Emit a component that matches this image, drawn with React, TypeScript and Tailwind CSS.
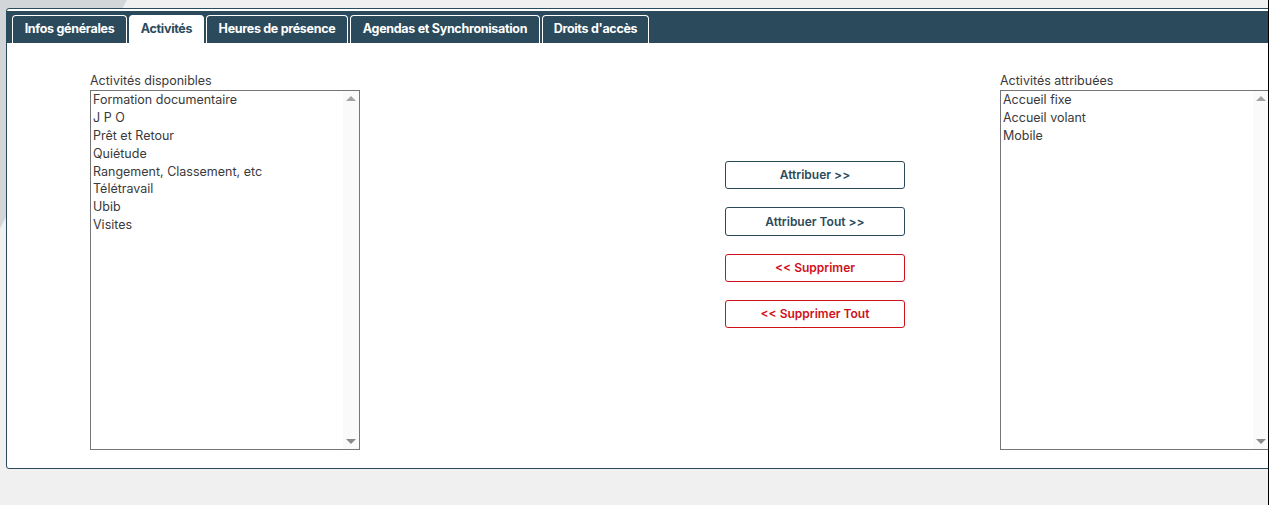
import React from "react";

const dispo = [
  "Formation documentaire",
  "J P O",
  "Prêt et Retour",
  "Quiétude",
  "Rangement, Classement, etc",
  "Télétravail",
  "Ubib",
  "Visites",
];
const attrib = ["Accueil fixe", "Accueil volant", "Mobile"];

const tabs: { t: string; w: string }[] = [
  { t: "Infos générales", w: "w-[115px]" },
  { t: "Activités", w: "w-[75px]" },
  { t: "Heures de présence", w: "w-[142px]" },
  { t: "Agendas et Synchronisation", w: "w-[190px]" },
  { t: "Droits d'accès", w: "w-[107px]" },
];

function ListBox({ items }: { items: string[] }) {
  return (
    <div className="relative flex h-[360px] w-[270px] border border-[#767676] bg-white">
      <div className="flex-1 pl-[2px]">
        {items.map((t) => (
          <div key={t} className="h-[17.9px] text-[12.5px] leading-[17.9px] text-[#3a3a3a]">
            {t}
          </div>
        ))}
      </div>
      <div className="flex w-[16px] flex-col items-center justify-between bg-[#fafafa] py-[5px]">
        <div className="h-0 w-0 border-x-[5px] border-b-[5px] border-x-transparent border-b-[#a3a3a3]" />
        <div className="h-0 w-0 border-x-[5px] border-t-[5px] border-x-transparent border-t-[#8a8a8a]" />
      </div>
    </div>
  );
}

export default function App() {
  return (
    <div
      className="relative h-[505px] w-[1269px] overflow-hidden bg-[#f0f0f0]"
      style={{ fontFamily: "Inter, 'Noto Sans', sans-serif" }}
    >
      <svg className="absolute left-0 top-0" width="140" height="240">
        <polygon points="0,0 127,0 0,228" fill="#d2d6d9" />
      </svg>
      <div className="absolute left-[6px] top-[8px] w-[1340px] rounded-[3px] border border-[#2b4a5c] bg-white pt-[2px]">
        <div className="flex h-[32px] items-end gap-[2px] bg-[#2b4a5c] px-[5px]">
          {tabs.map(({ t, w }, i) =>
            i === 1 ? (
              <div
                key={t}
                className={`${w} flex h-[28px] shrink-0 items-center justify-center whitespace-nowrap rounded-t-[4px] border border-b-0 border-white bg-white text-[12.5px] font-bold tracking-[-0.3px] text-[#2b4a5c]`}
              >
                {t}
              </div>
            ) : (
              <div
                key={t}
                className={`${w} flex h-[28px] shrink-0 items-center justify-center whitespace-nowrap rounded-t-[4px] border border-b-0 border-white bg-[#2b4a5c] text-[12.5px] font-bold tracking-[-0.3px] text-white`}
              >
                {t}
              </div>
            )
          )}
        </div>
        <div className="flex pb-[18px] pl-[83px] pt-[31px]">
          <div className="flex flex-col">
            <div className="mb-[2px] h-[14px] text-[12.5px] leading-[14px] text-[#3a3a3a]">Activités disponibles</div>
            <ListBox items={dispo} />
          </div>
          <div className="ml-[365px] flex w-[180px] flex-col gap-[18px] pt-[87px]">
            <button className="h-[28px] rounded-[3px] border border-[#2b4a5c] bg-white text-[12px] font-semibold text-[#2b4a5c]">
              Attribuer &gt;&gt;
            </button>
            <button className="h-[29px] rounded-[3px] border border-[#2b4a5c] bg-white text-[12px] font-semibold text-[#2b4a5c]">
              Attribuer Tout &gt;&gt;
            </button>
            <button className="h-[28px] rounded-[3px] border border-[#d0101b] bg-white text-[12px] font-semibold text-[#d0101b]">
              &lt;&lt; Supprimer
            </button>
            <button className="h-[28px] rounded-[3px] border border-[#d0101b] bg-white text-[12px] font-semibold text-[#d0101b]">
              &lt;&lt; Supprimer Tout
            </button>
          </div>
          <div className="ml-[95px] flex flex-col">
            <div className="mb-[2px] h-[14px] text-[12.5px] leading-[14px] text-[#3a3a3a]">Activités attribuées</div>
            <ListBox items={attrib} />
          </div>
        </div>
      </div>
      <div className="absolute right-0 top-0 h-full w-px bg-black" />
    </div>
  );
}
